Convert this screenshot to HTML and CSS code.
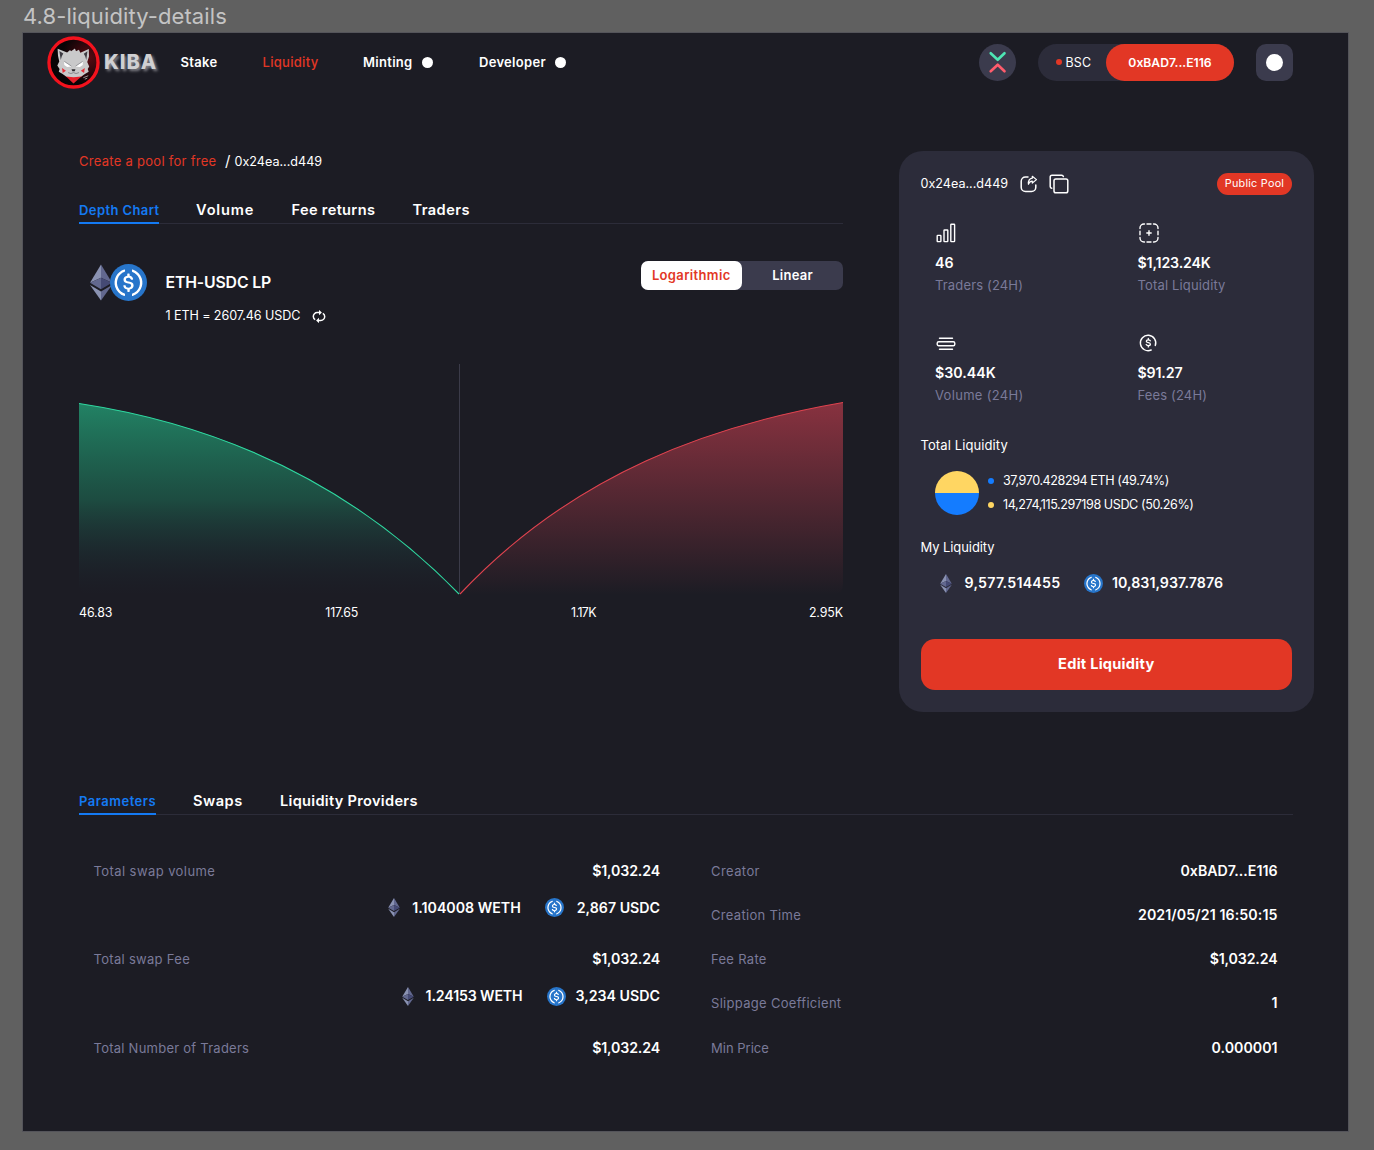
FILE: index.html
```html
<!DOCTYPE html>
<html lang="en">
<head>
<meta charset="utf-8">
<title>4.8-liquidity-details</title>
<link rel="stylesheet" href="styles.css">
</head>
<body>
<svg class="defs" width="0" height="0" aria-hidden="true">
  <symbol id="eth" viewBox="0 0 22 36">
    <path d="M11 0 0 18.3 11 13.3Z" fill="#8a92b2"/>
    <path d="M11 0 22 18.3 11 13.3Z" fill="#62688f"/>
    <path d="M0 18.3 11 24.8V13.3Z" fill="#62688f"/>
    <path d="M22 18.3 11 24.8V13.3Z" fill="#454a75"/>
    <path d="M0 20.5 11 36V27Z" fill="#8a92b2"/>
    <path d="M22 20.5 11 36V27Z" fill="#62688f"/>
  </symbol>
  <symbol id="usdc" viewBox="0 0 2000 2000">
    <circle cx="1000" cy="1000" r="1000" fill="#2775ca"/>
    <path d="M1275 1158.33c0-145.83-87.5-195.83-262.5-216.66-125-16.67-150-50-150-108.34s41.67-95.83 125-95.83c75 0 116.67 25 137.5 87.5 4.17 12.5 16.67 20.83 29.17 20.83h66.66c16.67 0 29.17-12.5 29.17-29.16v-4.17c-16.67-91.67-91.67-162.5-187.5-170.83v-100c0-16.67-12.5-29.17-33.33-33.34h-62.5c-16.67 0-29.17 12.5-33.34 33.34v95.83c-125 16.67-204.16 100-204.16 204.17 0 137.5 83.33 191.66 258.33 212.5 116.67 20.83 154.17 45.83 154.17 112.5s-58.34 112.5-137.5 112.5c-108.34 0-145.84-45.84-158.34-108.34-4.16-16.66-16.66-25-29.16-25h-70.84c-16.66 0-29.16 12.5-29.16 29.17v4.17c16.66 104.16 83.33 179.16 220.83 200v100c0 16.66 12.5 29.16 33.33 33.33h62.5c16.67 0 29.17-12.5 33.34-33.33v-100c125-20.84 208.33-108.34 208.33-220.84z" fill="#fff"/>
    <path d="M787.5 1595.83c-325-116.66-491.67-479.16-370.83-800 62.5-175 200-308.33 370.83-370.83 16.67-8.33 25-20.83 25-41.67V325c0-16.67-8.33-29.17-25-33.33-4.17 0-12.5 0-16.67 4.16-395.83 125-612.5 545.84-487.5 941.67 75 233.33 254.17 412.5 487.5 487.5 16.67 8.33 33.34 0 37.5-16.67 4.17-4.16 4.17-8.33 4.17-16.66v-58.34c0-12.5-12.5-29.16-25-37.5zM1229.17 295.83c-16.67-8.33-33.34 0-37.5 16.67-4.17 4.17-4.17 8.33-4.17 16.67v58.33c0 16.67 12.5 33.33 25 41.67 325 116.66 491.67 479.16 370.83 800-62.5 175-200 308.33-370.83 370.83-16.67 8.33-25 20.83-25 41.67V1700c0 16.67 8.33 29.17 25 33.33 4.17 0 12.5 0 16.67-4.16 395.83-125 612.5-545.84 487.5-941.67-75-237.5-258.34-416.67-487.5-491.67z" fill="#fff"/>
  </symbol>
</svg>

<p class="frame-label">4.8-liquidity-details</p>
<div class="frame">
  <header class="header">
    <a class="brand">
      <svg class="logo" viewBox="0 0 54 54">
        <defs><radialGradient id="logoBg" cx=".8" cy=".4" r=".55"><stop offset="0" stop-color="#5a0a12"/><stop offset="1" stop-color="#080406"/></radialGradient></defs>
        <circle cx="27" cy="27" r="25" fill="url(#logoBg)" stroke="#f3121d" stroke-width="3.400"/>
        <path d="M18 40 27 48.500 36.500 40Z" fill="#e8202b"/>
        <path d="M10.800 13 20.500 16.800 23.500 14.200 24.500 15.500 28.500 12.800 29.500 15.500 32.500 14 34 17 42.600 13.200 42.800 21 41 26.500 43 31 41.500 33.500 42.500 36.500 39 38.500 35 41.200 27 42 19.500 41.200 15.500 38.500 12 36.500 12.800 33.500 10.500 30 12.500 26 11.200 20Z" fill="#c9c9ca"/>
        <path d="M12.600 15.200 16.600 17.800 15 21 14 24.500Z" fill="#3d3b42"/>
        <path d="M41.200 15.600 37.500 18 39 21 40 24.500Z" fill="#3d3b42"/>
        <path d="M17.500 25.500 19 27.300 24.800 31 20.500 31.600 17.600 29.500Z" fill="#fff"/>
        <path d="M36.500 25.500 35 27.300 29.200 31 33.500 31.600 36.400 29.500Z" fill="#fff"/>
        <path d="M17.500 25.700 24.800 30.600M36.500 25.700 29.200 30.600" stroke="#8d8d92" stroke-width=".8" fill="none"/>
        <path d="M25 33.800H29L28.200 35.800H25.800Z" fill="#2a282c"/>
        <path d="M21.500 37.300Q24.500 39.200 27 37.300Q29.500 39.200 32.500 37.300" fill="none" stroke="#808085" stroke-width=".9"/>
        <path d="M15.300 32.500 19.300 35.300 16 37.700ZM38.500 32.500 34.500 35.300 37.800 37.700Z" fill="#e8303a"/>
        <path d="M37 42.500 42 40.500M38.500 44 41 43" stroke="#bbb" stroke-width=".8"/>
      </svg>
      <span class="brand-name">KIBA</span>
    </a>
    <nav class="nav">
      <a class="nav-stake">Stake</a>
      <a class="nav-liquidity">Liquidity</a>
      <a class="nav-minting">Minting<i class="nav-dot"></i></a>
      <a class="nav-developer">Developer<i class="nav-dot"></i></a>
    </nav>
    <div class="account">
      <span class="swap-badge">
        <svg width="37" height="37" viewBox="0 0 37 37" fill="none" stroke-width="2.600" stroke-linecap="round" stroke-linejoin="round"><path d="M11.700 9.200 18.700 15.800 25.500 9.200" stroke="#4ee6b4"/><path d="M11.700 27.300 18.700 20.700 25.500 27.300" stroke="#ff5c6c"/></svg>
      </span>
      <div class="wallet">
        <span class="chain"><i class="chain-dot"></i>BSC</span>
        <span class="address">0xBAD7...E116</span>
      </div>
      <span class="menu"><i class="menu-dot"></i></span>
    </div>
  </header>

  <main>
    <div class="top">
      <section class="overview">
        <p class="crumbs"><a class="crumb-link">Create a pool for free</a><span class="crumb-sep">/</span><span class="hash">0x24ea...d449</span></p>
        <div class="tabs">
          <a class="tab tab-active tab-depth">Depth Chart</a><a class="tab tab-volume">Volume</a><a class="tab tab-fee">Fee returns</a><a class="tab tab-traders">Traders</a>
        </div>
        <div class="pair">
          <div class="pair-icons"><svg class="pair-eth"><use href="#eth"/></svg><svg class="pair-usdc"><use href="#usdc"/></svg></div>
          <div class="pair-text">
            <h1 class="pair-name">ETH-USDC LP</h1>
            <p class="rate">1 ETH = 2607.46 USDC
              <svg width="14" height="13" viewBox="0 0 14 13" fill="none" stroke="#fff" stroke-width="1.500"><path d="M3.200 9.700A3.700 3.700 0 0 1 1.300 6.500A3.900 3.900 0 0 1 5.200 2.600H8"/><path d="M10.800 3.300A3.700 3.700 0 0 1 12.700 6.500A3.900 3.900 0 0 1 8.800 10.400H6"/><path d="M7-.1V5.300L9.900 2.600ZM7 7.700V13.100L4.100 10.400Z" fill="#fff" stroke="none"/></svg>
            </p>
          </div>
          <div class="toggle"><span class="toggle-on">Logarithmic</span><span class="toggle-off">Linear</span></div>
        </div>
        <svg class="chart" viewBox="0 0 764 232">
          <defs>
            <linearGradient id="bid" x1="0" y1="39" x2="0" y2="231" gradientUnits="userSpaceOnUse"><stop offset="0" stop-color="#23936f" stop-opacity=".86"/><stop offset=".5" stop-color="#1e8563" stop-opacity=".46"/><stop offset="1" stop-color="#1c3040" stop-opacity="0"/></linearGradient>
            <linearGradient id="ask" x1="0" y1="38" x2="0" y2="231" gradientUnits="userSpaceOnUse"><stop offset="0" stop-color="#f5485b" stop-opacity=".5"/><stop offset="1" stop-color="#f5485b" stop-opacity="0"/></linearGradient>
          </defs>
          <path d="M0 39.500C135 60 267 114 380 230H9Q0 230 0 220Z" fill="url(#bid)"/>
          <path d="M381 230C496 108 634 61 764 38.500V220Q764 230 755 230Z" fill="url(#ask)"/>
          <path d="M380.500 0V230" stroke="#3b3b49"/>
          <path d="M0 39.500C135 60 267 114 380 230" fill="none" stroke="#2fd8a0" stroke-width="1.100"/>
          <path d="M381 230C496 108 634 61 764 38.500" fill="none" stroke="#e0434f" stroke-width="1.100"/>
        </svg>
        <div class="axis"><span>46.83</span><span class="axis-second">117.65</span><span class="axis-tight">1.17K</span><span>2.95K</span></div>
      </section>

      <aside class="card">
        <div class="card-head">
          <span class="hash">0x24ea...d449</span>
          <svg class="share" width="18" height="18" viewBox="0 0 18 18" fill="none" stroke="#fff" stroke-width="1.500" stroke-linejoin="round" stroke-linecap="round"><path d="M8 2H5.500A4.300 4.300 0 0 0 1.200 6.300V12.200A4.300 4.300 0 0 0 5.500 16.500H11.500A4.300 4.300 0 0 0 15.800 12.200V10"/><path d="M12.300 1.300 16.500 4.600 12.300 8V6.200Q9.500 6.200 8.400 9.300Q8 3.800 12.300 3.200Z" stroke-width="1.200"/></svg>
          <svg width="20" height="20" viewBox="0 0 20 20" fill="none" stroke="#fff" stroke-width="1.500" stroke-linejoin="round" stroke-linecap="round"><rect x="5" y="5" width="13.800" height="13.800" rx="1.800"/><path d="M2.800 14.200A1.800 1.800 0 0 1 1.200 12.400V3A1.800 1.800 0 0 1 3 1.200H12.600A1.800 1.800 0 0 1 14.400 2.600"/></svg>
          <span class="pill">Public Pool</span>
        </div>
        <div class="stats">
          <div class="stat">
            <svg viewBox="0 0 20 20" fill="none" stroke="#fff" stroke-width="1.400" stroke-linejoin="round"><rect x="1.200" y="12.400" width="3.700" height="6.200" rx=".5"/><rect x="8" y="7" width="3.800" height="11.600" rx=".5"/><rect x="14.800" y="1.200" width="3.800" height="17.400" rx=".5"/></svg>
            <b>46</b><span class="label ls-stat">Traders (24H)</span>
          </div>
          <div class="stat">
            <svg viewBox="0 0 20 20" fill="none" stroke="#fff" stroke-width="1.400" stroke-linecap="round"><path d="M1 5.500V5A4 4 0 0 1 5 1H5.500M14.500 1H15A4 4 0 0 1 19 5V5.500M19 14.500V15A4 4 0 0 1 15 19H14.500M5.500 19H5A4 4 0 0 1 1 15V14.500M8 1H12M8 19H12M1 8.200V11.800M19 8.200V11.800M10 7.800V12.200M7.800 10H12.200"/></svg>
            <b class="tight">$1,123.24K</b><span class="label ls-stat">Total Liquidity</span>
          </div>
          <div class="stat">
            <svg viewBox="0 0 20 20" fill="none" stroke="#fff" stroke-width="1.400" stroke-linecap="round"><path d="M3.500 5.200H16.500M3.500 16.200H16.500"/><rect x="1.200" y="8.700" width="17.600" height="4" rx="1.500"/></svg>
            <b>$30.44K</b><span class="label">Volume (24H)</span>
          </div>
          <div class="stat">
            <svg viewBox="0 0 20 20" fill="none" stroke="#fff" stroke-width="1.400" stroke-linecap="round"><path d="M12.200 17A7.700 7.700 0 1 1 16.300 12.600"/><path d="M11.300 7.800Q10.800 6.800 9.300 6.800Q7.300 6.800 7.300 8.200Q7.300 9.300 9.300 9.600Q11.400 9.900 11.400 11.200Q11.400 12.600 9.300 12.600Q7.700 12.600 7.200 11.500M9.300 5.500V6.800M9.300 12.600V13.900" stroke-width="1.300"/></svg>
            <b class="tight">$91.27</b><span class="label ls-stat">Fees (24H)</span>
          </div>
        </div>
        <h2 class="card-title total-title">Total Liquidity</h2>
        <div class="split">
          <i class="pie"></i>
          <ul class="legend">
            <li><i class="dot dot-eth"></i>37,970.428294 ETH (49.74%)</li>
            <li><i class="dot dot-usdc"></i>14,274,115.297198 USDC (50.26%)</li>
          </ul>
        </div>
        <h2 class="card-title my-title">My Liquidity</h2>
        <div class="holdings">
          <svg class="eth"><use href="#eth"/></svg><b class="held-eth">9,577.514455</b><svg class="usdc"><use href="#usdc"/></svg><b class="held-usdc">10,831,937.7876</b>
        </div>
        <button class="edit">Edit Liquidity</button>
      </aside>
    </div>

    <section class="details">
      <div class="tabs">
        <a class="tab tab-active tab-params">Parameters</a><a class="tab tab-swaps">Swaps</a><a class="tab tab-providers">Liquidity Providers</a>
      </div>
      <div class="params">
        <div class="column">
          <div class="group">
            <div class="row"><span class="label label-wide">Total swap volume</span><b class="tight">$1,032.24</b></div>
            <div class="tokens"><svg class="eth"><use href="#eth"/></svg><b class="amount-first">1.104008 WETH</b><svg class="usdc"><use href="#usdc"/></svg><b>2,867 USDC</b></div>
          </div>
          <div class="group">
            <div class="row"><span class="label">Total swap Fee</span><b class="tight">$1,032.24</b></div>
            <div class="tokens tokens-near"><svg class="eth"><use href="#eth"/></svg><b class="amount-first tight">1.24153 WETH</b><svg class="usdc"><use href="#usdc"/></svg><b>3,234 USDC</b></div>
          </div>
          <div class="row"><span class="label label-long">Total Number of Traders</span><b class="tight">$1,032.24</b></div>
        </div>
        <div class="column">
          <div class="row"><span class="label label-wide">Creator</span><b>0xBAD7...E116</b></div>
          <div class="row"><span class="label">Creation Time</span><b class="time">2021/05/21 16:50:15</b></div>
          <div class="row"><span class="label">Fee Rate</span><b class="tight">$1,032.24</b></div>
          <div class="row"><span class="label">Slippage Coefficient</span><b>1</b></div>
          <div class="row"><span class="label ls-none">Min Price</span><b>0.000001</b></div>
        </div>
      </div>
    </section>
  </main>
</div>
</body>
</html>
```
FILE: styles.css
```css
* { box-sizing: border-box; margin: 0; padding: 0; }
body {
  width: 1374px;
  height: 1150px;
  background: #606060;
  color: #fff;
  font: 400 13px/20px Inter, sans-serif;
  overflow: hidden;
  white-space: nowrap;
}
i { display: block; flex: none; border-radius: 50%; }
svg { display: block; flex: none; }
.defs { position: absolute; }
ul { list-style: none; }
b { font-size: 14.2px; font-weight: 600; }
.tight { letter-spacing: -.15px; }

.frame-label { height: 33px; padding-left: 23px; font-size: 22px; line-height: 33px; color: #c4c4c4; letter-spacing: .1px; }
.frame { width: 1325px; height: 1098px; margin-left: 23px; background: #1c1c24; box-shadow: 0 0 0 1px #54545a; }

/* Header */
.header { display: flex; align-items: center; height: 58px; padding: 0 55px 0 24px; }
.brand { display: flex; align-items: center; width: 133.500px; }
.logo { width: 53px; height: 53px; }
.brand-name { margin-left: 4px; font-size: 20px; font-weight: 800; line-height: 24px; letter-spacing: 1px; color: #d0d0d2; text-shadow: 2px 2px 3px #85858c; }
.nav { display: flex; font-weight: 600; letter-spacing: .3px; }
.nav a { display: flex; align-items: center; }
.nav-stake { width: 82px; }
.nav-liquidity { width: 100.500px; color: #e23725; font-weight: 500; }
.nav-minting { width: 116px; }
.nav-dot { width: 11px; height: 11px; margin-left: 9.500px; background: #fff; }
.account { display: flex; margin-left: auto; }
.swap-badge { width: 37px; height: 37px; border-radius: 50%; background: #3b3b4d; }
.wallet { display: flex; width: 196px; height: 37px; margin: 0 22px; border-radius: 19px; background: #2c2c3a; line-height: 37px; }
.chain { display: flex; align-items: center; width: 68px; padding-left: 18px; font-size: 12.4px; letter-spacing: .2px; }
.chain-dot { width: 6px; height: 6px; margin-right: 3.500px; background: #e23725; }
.address { width: 128px; border-radius: 19px; background: #e23725; text-align: center; font-size: 12.2px; font-weight: 600; }
.menu { display: flex; align-items: center; justify-content: center; width: 37px; height: 37px; border-radius: 10px; background: #3b3b4d; }
.menu-dot { width: 17px; height: 17px; background: #fff; }

/* Depth overview */
.top { display: flex; align-items: flex-start; gap: 56px; padding: 60px 0 0 56px; }
.overview { width: 764px; }
.crumbs { display: flex; }
.crumb-link { width: 146px; color: #e23725; letter-spacing: .28px; }
.crumb-sep { width: 9.500px; font-size: 15px; }
.hash { font-size: 12.6px; line-height: 21px; }
.tabs { display: flex; gap: 37px; height: 28px; border-bottom: 1px solid #2c2c39; font-size: 14.6px; font-weight: 600; line-height: 28px; }
.overview .tabs { margin-top: 24px; }
.tab { height: 28px; }
.tab-active { border-bottom: 2px solid #147af3; color: #147af3; font-size: 13px; font-weight: 600; }
.tab-depth { width: 80px; letter-spacing: .4px; }
.tab-volume { width: 58.500px; letter-spacing: .85px; }
.tab-fee { width: 84px; letter-spacing: .33px; }
.tab-traders { letter-spacing: .42px; }
.pair { display: flex; align-items: flex-start; margin-top: 37px; padding-left: 11px; }
.pair-icons { display: flex; margin-top: 3px; }
.pair-eth { width: 22px; height: 37px; }
.pair-usdc { width: 37px; height: 37px; margin-left: -2px; }
.pair-text { margin: 12px 0 0 18.500px; }
.pair-name { font-size: 15.8px; font-weight: 600; line-height: 20px; letter-spacing: -.15px; }
.rate { display: flex; align-items: center; gap: 12px; margin-top: 13px; font-size: 12.6px; letter-spacing: -.1px; }
.toggle { display: flex; width: 202.500px; margin-left: auto; border-radius: 7px; background: #3b3b4d; font-weight: 600; line-height: 29px; text-align: center; }
.toggle-on { width: 101.500px; border-radius: 7px; background: #fff; color: #e23725; letter-spacing: .35px; }
.toggle-off { flex: 1; letter-spacing: .25px; }
.chart { width: 764px; height: 232px; margin-top: 38px; }
.axis { display: flex; justify-content: space-between; margin-top: 7px; font-size: 12.4px; letter-spacing: -.1px; }
.axis-second { letter-spacing: -.2px; }
.axis-tight { letter-spacing: -.6px; }

/* Pool card */
.card { width: 415px; height: 561px; padding: 22px 22px 22px 21.500px; border-radius: 24px; background: #2c2c3a; }
.card-head { display: flex; align-items: center; height: 21px; }
.card-head .share { margin: 0 11px 0 11.500px; }
.pill { width: 75px; height: 22px; margin-left: auto; border-radius: 11px; background: #e23725; font-size: 10.800px; line-height: 22px; text-align: center; letter-spacing: .25px; }
.stats { display: grid; grid-template-columns: 202.500px 1fr; grid-auto-rows: 72px; row-gap: 38px; margin: 29px 0 0 14.500px; }
.stat { display: flex; flex-direction: column; }
.stat svg { width: 20px; height: 20px; margin: 0 0 10px 1px; }
.stat .label { margin-top: 1.500px; }
.label { color: #7a7a99; letter-spacing: .3px; }
.stat .ls-stat { letter-spacing: .15px; }
.label-wide { letter-spacing: .42px; }
.label-long { letter-spacing: .25px; }
.ls-none { letter-spacing: 0; }
.card-title { font-size: 13px; font-weight: 400; line-height: 20px; }
.total-title { margin-top: 30px; letter-spacing: .1px; }
.split { display: flex; margin: 14px 0 0 14.500px; }
.pie { width: 44px; height: 44px; margin-top: 1.500px; background: linear-gradient(#ffd662 50%, #147cff 50%); }
.legend { margin-left: 8.500px; font-size: 12.6px; line-height: 24px; letter-spacing: -.43px; }
.legend li { display: flex; align-items: center; }
.dot { width: 6px; height: 6px; margin-right: 9.500px; }
.dot-eth { background: #147cff; }
.dot-usdc { background: #ffd662; }
.my-title { margin-top: 19.500px; letter-spacing: -.08px; }
.eth { width: 12px; height: 19px; }
.usdc { width: 19px; height: 19px; }
.holdings { display: flex; align-items: center; margin: 16.500px 0 0 19.500px; }
.held-eth { width: 119px; margin-left: 12.500px; letter-spacing: .25px; }
.held-usdc { margin-left: 9.500px; letter-spacing: .04px; }
.edit { display: block; width: 371.500px; height: 51px; margin-top: 45.500px; border: 0; border-radius: 14px; background: #e23725; color: #fff; font: 700 14.600px/51px Inter, sans-serif; letter-spacing: .25px; }

/* Parameters */
.details { margin: 75px 55px 0 56px; }
.tab-params { width: 77px; letter-spacing: .5px; }
.tab-swaps { width: 50px; letter-spacing: .5px; }
.tab-providers { letter-spacing: .3px; }
.params { display: flex; gap: 51px; margin: 45.500px 15.500px 0 14.500px; }
.column { display: flex; flex: 1; flex-direction: column; gap: 24.250px; }
.column:first-child { gap: 31.500px; }
.row { display: flex; align-items: center; justify-content: space-between; height: 20px; }
.tokens { display: flex; align-items: center; justify-content: flex-end; height: 20px; margin-top: 17px; }
.amount-first { margin: 0 24.500px 0 12px; }
.tokens .usdc { margin-right: 12.500px; }
.tokens-near .usdc { margin-right: 9.500px; }
.time { letter-spacing: .09px; }
```
